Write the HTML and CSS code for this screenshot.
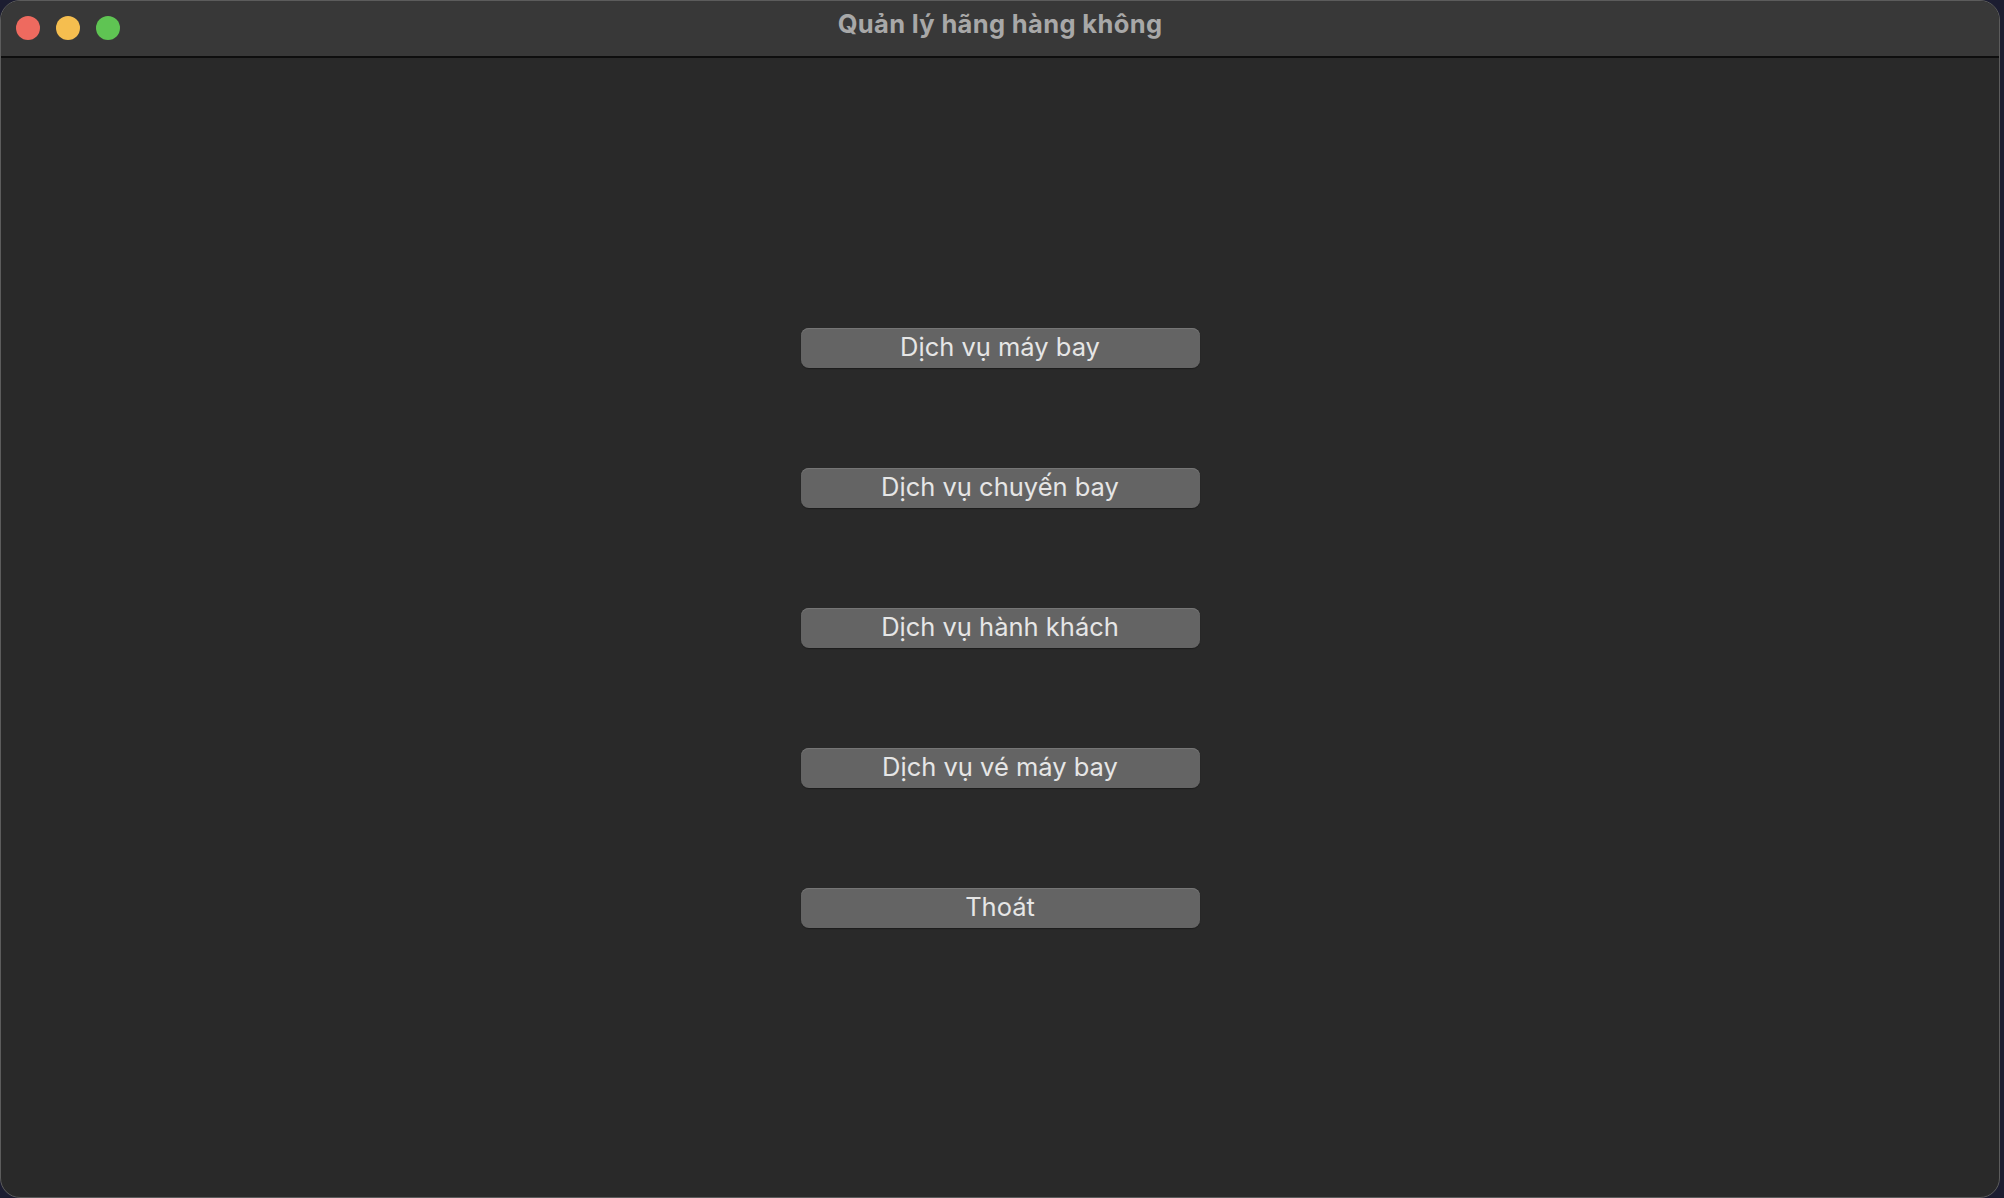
FILE: index.html
```html
<!DOCTYPE html>
<html lang="vi">
<head>
<meta charset="utf-8">
<title>Quản lý hãng hàng không</title>
<link rel="stylesheet" href="styles.css">
</head>
<body>
<div class="window">
  <div class="titlebar">
    <div class="lights">
      <span class="light red"></span>
      <span class="light yellow"></span>
      <span class="light green"></span>
    </div>
    <div class="title">Quản lý hãng hàng không</div>
  </div>
  <div class="content">
    <button class="btn">Dịch vụ máy bay</button>
    <button class="btn">Dịch vụ chuyến bay</button>
    <button class="btn">Dịch vụ hành khách</button>
    <button class="btn">Dịch vụ vé máy bay</button>
    <button class="btn">Thoát</button>
  </div>
</div>
</body>
</html>
```
FILE: styles.css
```css
html, body {
  margin: 0;
  padding: 0;
  width: 2004px;
  height: 1198px;
  overflow: hidden;
  background: #1c1d31;
  font-family: Inter, "Noto Sans", "Liberation Sans", sans-serif;
}
.window {
  box-sizing: border-box;
  width: 2000px;
  height: 1198px;
  border: 1px solid #5c5c5c;
  border-radius: 20px;
  overflow: hidden;
  background: #292929;
  display: flex;
  flex-direction: column;
}
.titlebar {
  position: relative;
  height: 55px;
  flex: none;
  background: #383838;
  border-bottom: 2px solid #0e0e0e;
  display: flex;
  align-items: center;
  justify-content: center;
}
.lights {
  position: absolute;
  left: 15px;
  top: 15px;
  display: flex;
  gap: 16px;
}
.light {
  width: 24px;
  height: 24px;
  border-radius: 50%;
  display: block;
}
.red { background: #ee6a5f; }
.yellow { background: #f5be4f; }
.green { background: #5fc453; }
.title {
  color: #a8a8a8;
  font-size: 25.5px;
  font-weight: 700;
  margin-top: -10px;
  letter-spacing: 0.35px;
}
.content {
  flex: 1;
  display: flex;
  flex-direction: column;
  align-items: center;
  padding-top: 270px;
  gap: 100px;
}
.btn {
  width: 399px;
  height: 40px;
  border: none;
  border-radius: 8px;
  background: #646464;
  box-shadow: inset 0 1px 0 #757575, 0 1px 1px rgba(0,0,0,0.3);
  color: #e6e6e6;
  font-family: Inter, "Noto Sans", "Liberation Sans", sans-serif;
  font-size: 25.5px;
  font-weight: 400;
  letter-spacing: 0;
  padding: 0 0 2px 0;
  line-height: 38px;
}
```
